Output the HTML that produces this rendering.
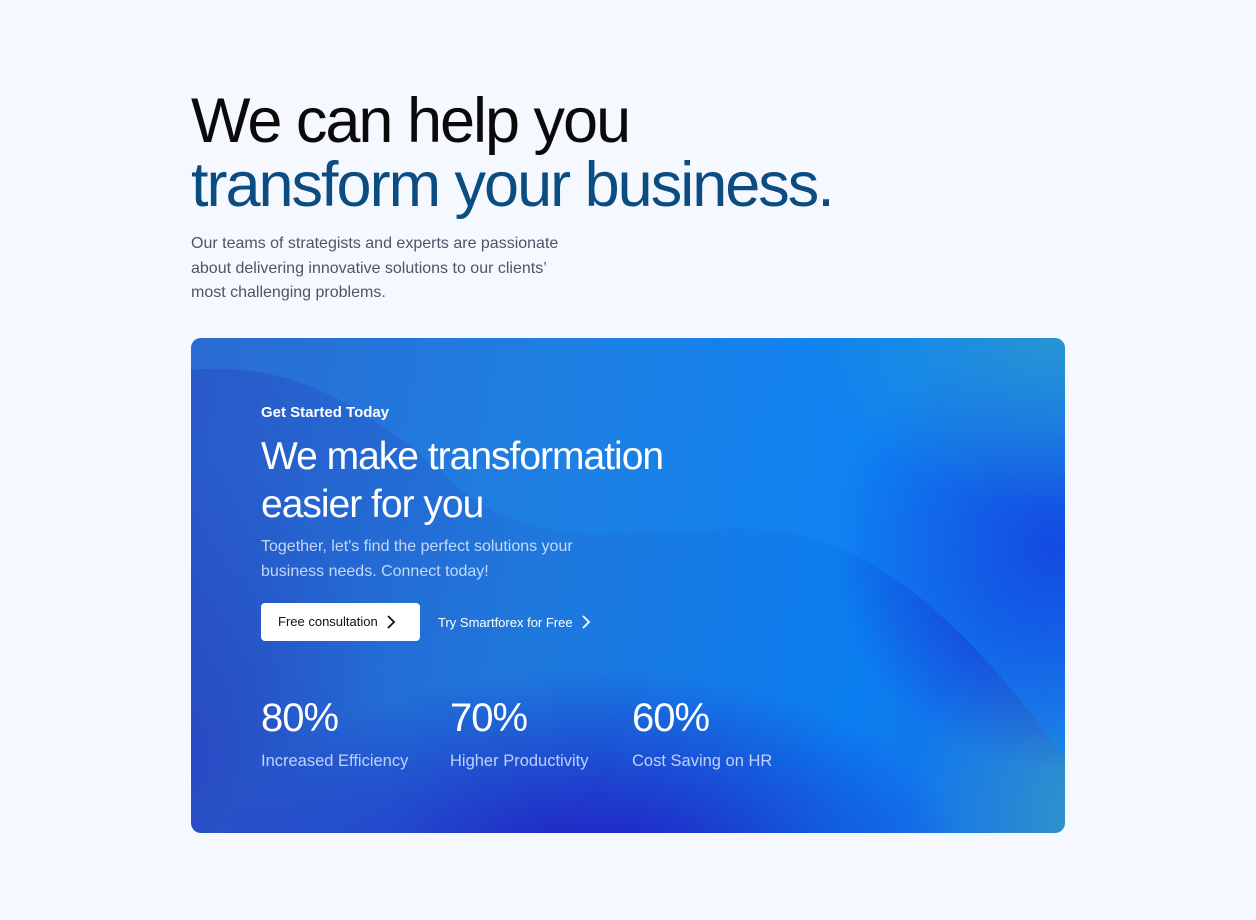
<!DOCTYPE html>
<html><head><meta charset="utf-8"><style>
*{margin:0;padding:0;box-sizing:border-box}
body{width:1256px;height:920px;background:#f5f8ff;font-family:"Liberation Sans",sans-serif;position:relative;overflow:hidden}
h1{position:absolute;left:191px;top:89px;font-size:63px;line-height:64px;font-weight:400;letter-spacing:-2.0px;color:#0a0a0a}
h1 span{color:#0b4d80}
.p{position:absolute;left:191px;top:232px;width:385px;font-size:16px;line-height:24.5px;color:#4a5566}
.card{position:absolute;left:191px;top:338px;width:874px;height:495px;border-radius:10px;overflow:hidden;
background:
radial-gradient(ellipse 380px 200px at 400px 530px,rgba(34,20,190,.95),rgba(34,20,190,0)),
radial-gradient(ellipse 200px 300px at 0px 420px,rgba(40,60,190,.6),rgba(40,60,190,0)),
radial-gradient(ellipse 260px 170px at 874px 0px,rgba(60,160,180,.95),rgba(60,160,180,0)),
radial-gradient(ellipse 220px 220px at 860px 210px,rgba(25,35,205,1),rgba(25,35,205,0)),
radial-gradient(ellipse 180px 220px at 900px 480px,rgba(50,150,200,1),rgba(50,150,200,0)),
linear-gradient(100deg,#2a58c8 0%,#1f78dc 40%,#0b7ef0 75%,#1a6ee8 100%)}
.t{position:absolute;color:#fff}
.btn{position:absolute;left:70px;top:265px;width:159px;height:38px;background:#fff;border-radius:4px;font-size:13px;color:#111;padding:11px 0 0 17px}
.stat{position:absolute;top:358px;font-size:40px;color:#fff;letter-spacing:-1px}
.lab{position:absolute;top:414px;font-size:16.5px;color:rgba(220,230,255,.85)}
</style></head><body>
<h1>We can help you<br><span>transform your business.</span></h1>
<div class="p">Our teams of strategists and experts are passionate about delivering innovative solutions to our clients’ most challenging problems.</div>
<div class="card">
<svg width="874" height="495" style="position:absolute;left:0;top:0">
<defs><linearGradient id="w" x1="0" y1="0" x2="1" y2="0"><stop offset="0" stop-color="#2a8fe0" stop-opacity=".35"/><stop offset="1" stop-color="#0a88ff" stop-opacity=".4"/></linearGradient></defs>
<path d="M0 32 C120 20 200 90 280 160 C380 230 520 170 620 200 C720 230 800 320 874 420 L874 0 L0 0Z" fill="url(#w)"/>
</svg>
<div class="t" style="left:70px;top:66px;font-size:15px;font-weight:bold">Get Started Today</div>
<div class="t" style="left:70px;top:95px;font-size:39px;line-height:48px;letter-spacing:-1px">We make transformation<br>easier for you</div>
<div class="t" style="left:70px;top:197px;font-size:16px;line-height:24.5px;color:rgba(225,235,255,.85)">Together, let's find the perfect solutions your<br>business needs. Connect today!</div>
<div class="btn">Free consultation <svg width="10" height="14" style="position:absolute;left:125px;top:12px"><path d="M2 1l6 6-6 6" stroke="#111" stroke-width="1.8" fill="none"/></svg></div>
<div class="t" style="left:247px;top:277px;font-size:13px">Try Smartforex for Free</div>
<svg width="10" height="14" style="position:absolute;left:390px;top:277px"><path d="M2 1l6 6-6 6" stroke="#fff" stroke-width="1.8" fill="none"/></svg>
<div class="stat" style="left:70px">80%</div>
<div class="stat" style="left:259px">70%</div>
<div class="stat" style="left:441px">60%</div>
<div class="lab" style="left:70px">Increased Efficiency</div>
<div class="lab" style="left:259px">Higher Productivity</div>
<div class="lab" style="left:441px">Cost Saving on HR</div>
</div>
</body></html>
